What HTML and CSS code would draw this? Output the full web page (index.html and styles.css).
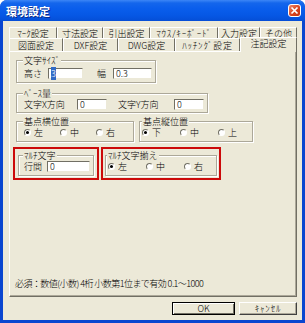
FILE: index.html
```html
<!DOCTYPE html>
<html lang="ja">
<head>
    <meta charset="UTF-8">
    <title>環境設定</title>
    <link rel="stylesheet" href="styles.css">
</head>
<body>

<div class="window">

    <div class="titlebar">
        <span class="title">環境設定</span>
        <span class="close-btn">
            <svg width="13" height="13" viewBox="0 0 13 13"><path d="M3.5 3.5 L9.5 9.5 M9.5 3.5 L3.5 9.5" stroke="#fff" stroke-width="1.7" /></svg>
        </span>
    </div>

    <div class="client">

        <div class="tab-row back">
            <div class="tab t-mark">ﾏｰｸ設定</div>
            <div class="tab t-dim">寸法設定</div>
            <div class="tab t-lead">引出設定</div>
            <div class="tab t-mouse kana">ﾏｳｽ/ｷｰﾎﾞｰﾄﾞ</div>
            <div class="tab t-input">入力設定</div>
            <div class="tab t-other">その他</div>
        </div>
        <div class="tab-row front">
            <div class="tab t-draw">図面設定</div>
            <div class="tab t-dxf">DXF設定</div>
            <div class="tab t-dwg">DWG設定</div>
            <div class="tab t-hatch kana">ﾊｯﾁﾝｸﾞ設定</div>
            <div class="tab t-note active">注記設定</div>
        </div>

        <div class="panel">

            <fieldset class="group g-size">
                <legend>文字ｻｲｽﾞ</legend>
                <div class="row">
                    <span class="lbl w24">高さ</span>
                    <span class="field w35"><span class="sel">3</span></span>
                    <span class="lbl w16 ml14">幅</span>
                    <span class="field w39">0.3</span>
                </div>
            </fieldset>

            <fieldset class="group g-base">
                <legend>ﾍﾞｰｽ量</legend>
                <div class="row">
                    <span class="lbl w53">文字X方向</span>
                    <span class="field w30">0</span>
                    <span class="lbl w56 ml11">文字Y方向</span>
                    <span class="field w30">0</span>
                </div>
            </fieldset>

            <div class="pair">
                <fieldset class="group g-hpos">
                    <legend>基点横位置</legend>
                    <div class="row">
                        <span class="radio"><span class="dot checked"></span>左</span>
                        <span class="radio"><span class="dot"></span>中</span>
                        <span class="radio"><span class="dot"></span>右</span>
                    </div>
                </fieldset>
                <fieldset class="group g-vpos">
                    <legend>基点縦位置</legend>
                    <div class="row">
                        <span class="radio"><span class="dot checked"></span>下</span>
                        <span class="radio"><span class="dot"></span>中</span>
                        <span class="radio"><span class="dot"></span>上</span>
                    </div>
                </fieldset>
            </div>

            <div class="pair marked">
                <div class="mark mark-line">
                    <fieldset class="group g-multi">
                        <legend>ﾏﾙﾁ文字</legend>
                        <div class="row">
                            <span class="lbl w23">行間</span>
                            <span class="field w43">0</span>
                        </div>
                    </fieldset>
                </div>
                <div class="mark mark-align">
                    <fieldset class="group g-align">
                        <legend>ﾏﾙﾁ文字揃え</legend>
                        <div class="row">
                            <span class="radio"><span class="dot checked"></span>左</span>
                            <span class="radio"><span class="dot"></span>中</span>
                            <span class="radio"><span class="dot"></span>右</span>
                        </div>
                    </fieldset>
                </div>
            </div>

            <div class="note">必須：数値(小数) 4桁 小数第1位まで有効 0.1～1000</div>
        </div>

        <div class="buttons">
            <div class="btn btn-ok">OK</div>
            <div class="btn btn-cancel kana">ｷｬﾝｾﾙ</div>
        </div>

    </div>
</div>

</body>
</html>
```

FILE: styles.css
```css
* {
    box-sizing: border-box;
}

body {
    margin: 0;
    background: #fff;
    font-family: "Noto Sans CJK JP", "Noto Sans", sans-serif;
    font-size: 9px;
    font-weight: 300;
    color: #000;
}

.window {
    width: 305px;
    height: 323px;
    display: flex;
    flex-direction: column;
    background: #0a46d0;
    border-radius: 7px 7px 0 0;
    overflow: hidden;
}

/* xp title bar */
.titlebar {
    height: 21px;
    flex: none;
    display: flex;
    align-items: center;
    justify-content: space-between;
    padding: 0 4px 0 6px;
    background: linear-gradient(#3c86f6 0, #1466ec 3px, #0a5eec 40%, #0657e4 75%, #054ed6 100%);
}

.title {
    color: #fff;
    font-size: 11px;
    font-weight: bold;
    text-shadow: 1px 1px #0a2a8a;
}

.close-btn {
    width: 13px;
    height: 13px;
    display: block;
    border: 1px solid #fff;
    border-radius: 3px;
    background: linear-gradient(135deg, #f08a6c, #d9441e 55%, #c2320f);
}

.close-btn svg {
    display: block;
    margin: -1px;
}

.client {
    flex: 1;
    display: flex;
    flex-direction: column;
    margin: 0 3px 3px;
    padding: 6px 5px 0 6px;
    background: #ece9d8;
}

/* tabs */
.tab-row {
    display: flex;
    flex: none;
}

.tab-row.back {
    height: 11px;
}

.tab-row.front {
    height: 13px;
}

.tab {
    display: flex;
    align-items: center;
    justify-content: center;
    white-space: nowrap;
    line-height: 9px;
    border-top: 1px solid #fff;
    border-left: 1px solid #fff;
    border-right: 1px solid #716f64;
    background: #ece9d8;
}

.kana {
    letter-spacing: 0.8px;
}

.t-mark { width: 48px; }
.t-dim { width: 46px; }
.t-lead { width: 47px; }
.t-mouse { width: 68px; }
.t-input { width: 42px; }
.t-other { width: 37px; }

.t-draw { width: 54px; }
.t-dxf { width: 55px; }
.t-dwg { width: 57px; }
.t-hatch { width: 65px; }
.t-note { width: 57px; }

.tab.active {
    position: relative;
    z-index: 1;
    height: 15px;
    margin-top: -1px;
    padding-bottom: 4px;
}

/* page of the tab control */
.panel {
    flex: 1;
    display: flex;
    flex-direction: column;
    align-items: flex-start;
    padding: 3px 0 0 6px;
    border: 1px solid;
    border-color: #fff #716f64 #716f64 #fff;
    box-shadow: inset -1px -1px #aca899;
}

.group {
    margin: 0;
    min-width: 0;
    border: 1px solid #aca899;
    box-shadow: inset 1px 1px #fff, 1px 1px #fff;
}

.group legend {
    padding: 0 1px;
    margin-left: -1px;
    line-height: 11px;
    background: #ece9d8;
}

.g-size {
    width: 140px;
    padding: 2px 3px 3px 7px;
}

.g-base {
    width: 192px;
    margin-top: 5px;
    padding: 0 3px 2px 7px;
}

.pair {
    display: flex;
    gap: 5px;
    margin-top: 3px;
}

.g-hpos {
    width: 118px;
    padding: 0 3px 3px 7px;
}

.g-vpos {
    width: 114px;
    padding: 0 3px 3px 2px;
}

.g-vpos legend {
    margin-left: 0;
}

.pair.marked {
    gap: 2px;
    margin-top: 5px;
    margin-left: -3px;
}

.mark {
    border: 2px solid #cc0a0a;
}

.mark-line {
    padding: 1px 3px 2px 3px;
}

.mark-align {
    padding: 1px 2px 2px 2px;
}

.g-multi {
    width: 76px;
    padding: 0 3px 3px 5px;
}

.g-align {
    width: 112px;
    padding: 0 2px 3px 2px;
}

.row {
    display: flex;
    align-items: center;
    height: 11px;
    line-height: 10px;
    white-space: nowrap;
}

.lbl {
    display: block;
    flex: none;
}

.w16 { width: 16px; }
.w23 { width: 23px; }
.w24 { width: 24px; }
.w30 { width: 30px; }
.w35 { width: 35px; }
.w39 { width: 39px; }
.w43 { width: 43px; }
.w53 { width: 53px; }
.w56 { width: 56px; }
.ml11 { margin-left: 11px; }
.ml14 { margin-left: 14px; }

.field {
    display: block;
    flex: none;
    height: 11px;
    line-height: 9px;
    padding-left: 2px;
    background: #fff;
    border: 1px solid;
    border-color: #716f64 #ece9d8 #ece9d8 #716f64;
}

.sel {
    background: #316ac5;
    color: #fff;
}

.radio {
    display: flex;
    align-items: center;
    width: 36px;
    flex: none;
}

.g-vpos .radio,
.g-align .radio {
    width: 38px;
}

.dot {
    width: 7px;
    height: 7px;
    margin-right: 3px;
    border-radius: 50%;
    border: 1px solid;
    border-color: #716f64 #fff #fff #716f64;
    background: #fff;
    display: flex;
    align-items: center;
    justify-content: center;
}

.dot.checked::after {
    content: "";
    width: 3px;
    height: 3px;
    border-radius: 50%;
    background: #000;
}

.note {
    margin-top: auto;
    margin-bottom: 7px;
    margin-left: -1px;
    line-height: 11px;
    letter-spacing: -0.55px;
    white-space: nowrap;
}

/* dialog buttons */
.buttons {
    flex: none;
    display: flex;
    justify-content: flex-end;
    gap: 4px;
    height: 13px;
    margin: 5px 0;
}

.btn {
    display: flex;
    align-items: center;
    justify-content: center;
    line-height: 11px;
    background: #ece9d8;
    border: 1px solid;
}

.btn-ok {
    width: 63px;
    border-color: #000;
    box-shadow: inset 1px 1px #fff, inset -1px -1px #716f64;
}

.btn-cancel {
    width: 58px;
    border-color: #fff #404040 #404040 #fff;
    box-shadow: inset -1px -1px #aca899;
}
```
